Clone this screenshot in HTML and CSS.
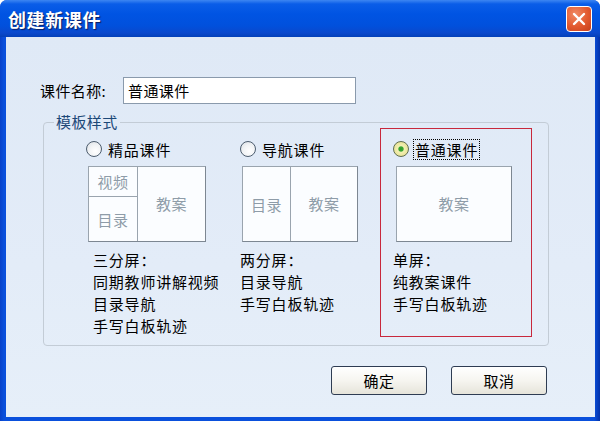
FILE: index.html
```html
<!DOCTYPE html>
<html lang="zh-CN">
<head>
    <meta charset="UTF-8">
    <meta name="viewport" content="width=device-width, initial-scale=1.0">
    <title>创建新课件</title>
    <link rel="stylesheet" href="styles.css">
</head>
<body>
    <div class="window">
        <div class="titlebar">
            <span class="title">创建新课件</span>
            <span class="close">
                <svg width="16" height="16" viewBox="0 0 16 16">
                    <path d="M3 3 L13 13 M13 3 L3 13" stroke="#fff" stroke-width="2.4" stroke-linecap="round"/>
                </svg>
            </span>
        </div>
        <div class="client">
            <div class="name-row">
                <label class="name-label" for="nomeCurso">课件名称:</label>
                <input type="text" id="nomeCurso" class="name-input" value="普通课件">
            </div>

            <fieldset class="group">
                <legend>模板样式</legend>
                <div class="options">
                    <div class="option opt-1">
                        <div class="radio-row">
                            <span class="radio"></span>
                            <span class="radio-label">精品课件</span>
                        </div>
                        <div class="preview three">
                            <div class="left-col">
                                <div class="cell cell-top">视频</div>
                                <div class="cell cell-bottom">目录</div>
                            </div>
                            <div class="cell main">教案</div>
                        </div>
                        <div class="desc indent">
                            <p>三分屏：</p>
                            <p>同期教师讲解视频</p>
                            <p>目录导航</p>
                            <p>手写白板轨迹</p>
                        </div>
                    </div>

                    <div class="option opt-2">
                        <div class="radio-row">
                            <span class="radio"></span>
                            <span class="radio-label">导航课件</span>
                        </div>
                        <div class="preview two">
                            <div class="cell side">目录</div>
                            <div class="cell main">教案</div>
                        </div>
                        <div class="desc">
                            <p>两分屏：</p>
                            <p>目录导航</p>
                            <p>手写白板轨迹</p>
                        </div>
                    </div>

                    <div class="option opt-3 selected">
                        <div class="radio-row">
                            <span class="radio checked"></span>
                            <span class="radio-label focus">普通课件</span>
                        </div>
                        <div class="preview one">
                            <div class="cell main">教案</div>
                        </div>
                        <div class="desc">
                            <p>单屏：</p>
                            <p>纯教案课件</p>
                            <p>手写白板轨迹</p>
                        </div>
                    </div>
                </div>
            </fieldset>

            <div class="buttons">
                <button class="btn">确定</button>
                <button class="btn">取消</button>
            </div>
        </div>
    </div>
</body>
</html>
```

FILE: styles.css
```css
* {
    margin: 0;
    padding: 0;
    box-sizing: border-box;
}

body {
    font-family: "Noto Sans CJK SC", "Liberation Sans", sans-serif;
    background: #ffffff;
    width: 600px;
    height: 421px;
    overflow: hidden;
}

.window {
    width: 600px;
    height: 421px;
    display: flex;
    flex-direction: column;
    background: linear-gradient(90deg, #0841c8 0, #0a50dc 4px, #0a50dc 594px, #0331a8 600px);
    border-radius: 7px 7px 0 0;
}

.titlebar {
    height: 37px;
    display: flex;
    align-items: center;
    justify-content: space-between;
    padding: 0 8px 0 8px;
    border-radius: 7px 7px 0 0;
    background: linear-gradient(180deg, #3d86f2 0, #0a5de8 4px, #0054e3 14px, #0150dc 26px, #0a48cc 33px, #0340b8 37px);
}

.title {
    color: #ffffff;
    font-size: 18px;
    font-weight: 700;
    letter-spacing: 0.6px;
    text-shadow: 1px 1px 1px #0a1c60;
    margin-top: 1px;
}

.close {
    width: 26px;
    height: 26px;
    border: 1px solid #ffffff;
    border-radius: 4px;
    background: radial-gradient(circle at 35% 30%, #f08a64 0, #e2592f 55%, #c43f1c 100%);
    display: flex;
    align-items: center;
    justify-content: center;
    margin-top: 1px;
}

.client {
    flex: 1;
    margin: 0 5px 4px 6px;
    background: linear-gradient(180deg, #dfe9f6 0, #e3ecf8 60%, #e6eff9 100%);
    padding: 40px 48px 0 0;
}

.name-row {
    display: flex;
    align-items: center;
    padding-left: 34px;
    height: 27px;
}

.name-label {
    width: 83px;
    font-size: 15px;
    color: #000;
    letter-spacing: 0.4px;
}

.name-input {
    width: 233px;
    height: 27px;
    border: 1px solid #8a9aac;
    background: #ffffff;
    font-family: inherit;
    font-size: 15px;
    padding: 0 4px;
    color: #000;
    letter-spacing: 0.4px;
}

.group {
    margin: 10px 0 0 37px;
    width: 506px;
    height: 232px;
    border: 1px solid #c3ccd6;
    border-radius: 4px;
    padding: 0;
}

.group legend {
    margin-left: 10px;
    padding: 0 2px;
    font-size: 15px;
    line-height: 16px;
    color: #1c4878;
    letter-spacing: 0.4px;
}

.options {
    display: flex;
    align-items: flex-start;
    padding-left: 42px;
}

.option {
    display: flex;
    flex-direction: column;
    padding-top: 8px;
}

.opt-1 {
    width: 154px;
}

.opt-2 {
    width: 140px;
}

.opt-3 {
    width: 152px;
    height: 209px;
    margin-top: -2px;
    padding: 9px 0 0 12px;
    border: 1px solid #c8283c;
}

.radio-row {
    display: flex;
    align-items: center;
    height: 22px;
}

.radio {
    width: 16px;
    height: 16px;
    border-radius: 50%;
    border: 1px solid #4d5d6e;
    background: radial-gradient(circle at 60% 65%, #ffffff 0, #f1f3f5 50%, #d8dde2 100%);
    margin-right: 5px;
}

.radio.checked {
    border-color: #5f6e50;
    background: radial-gradient(circle, #2f9a2a 0, #3aa734 22%, #f3f0b4 32%, #e9e49a 70%, #d2cc7c 100%);
}

.radio-label {
    font-size: 15px;
    color: #000;
    letter-spacing: 0.8px;
    line-height: 19px;
    padding: 0 1px;
}

.radio-label.focus {
    outline: 1px dotted #000;
}

.preview {
    margin: 6px 0 0 2px;
    width: 118px;
    height: 76px;
    border: 1px solid #9aa4ae;
    border-right-color: #7d8792;
    border-bottom-color: #7d8792;
    background: #fbfdff;
    display: flex;
}

.opt-2 .preview {
    width: 116px;
}

.opt-3 .preview {
    margin-left: 3px;
    width: 116px;
}

.cell {
    font-size: 15px;
    color: #8e9ca8;
    display: flex;
    align-items: center;
    justify-content: center;
    letter-spacing: 0.4px;
}

.left-col {
    width: 49px;
    display: flex;
    flex-direction: column;
    border-right: 1px solid #9aa4ae;
}

.cell-top {
    height: 30px;
    border-bottom: 1px solid #9aa4ae;
}

.cell-bottom {
    flex: 1;
}

.side {
    width: 48px;
    border-right: 1px solid #9aa4ae;
}

.main {
    flex: 1;
    padding-bottom: 2px;
}

.desc {
    margin-top: 7px;
}

.desc.indent {
    padding-left: 7px;
}

.desc p {
    font-size: 15px;
    line-height: 22px;
    color: #000;
    letter-spacing: 0.8px;
}

.buttons {
    display: flex;
    justify-content: flex-end;
    gap: 24px;
    margin-top: 20px;
}

.btn {
    width: 96px;
    height: 29px;
    border: 1px solid #2e3c52;
    border-radius: 3px;
    background: linear-gradient(180deg, #ffffff 0, #f6f5f0 50%, #e6e4da 100%);
    font-family: inherit;
    font-size: 15px;
    color: #000;
    letter-spacing: 0.6px;
}
```
